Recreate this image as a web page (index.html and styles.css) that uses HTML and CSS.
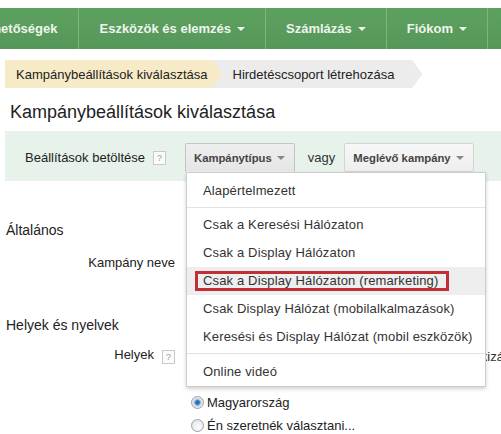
FILE: index.html
```html
<!DOCTYPE html>
<html>
<head>
  <meta charset="UTF-8">
  <meta name="viewport" content="width=device-width, initial-scale=1.0">
  <title>Kampánybeállítások</title>
  <link rel="stylesheet" href="styles.css">
</head>
<body>
  <!-- Top navigation -->
  <div class="topnav">
    <div class="nav-item nav-first">Lehetőségek</div>
    <div class="nav-item">Eszközök és elemzés <span class="caret"></span></div>
    <div class="nav-item">Számlázás <span class="caret"></span></div>
    <div class="nav-item">Fiókom <span class="caret"></span></div>
    <div class="nav-item nav-rest"></div>
  </div>

  <!-- Steps -->
  <div class="crumbs">
    <div class="crumb crumb-active">Kampánybeállítások kiválasztása</div>
    <div class="crumb crumb-next">Hirdetéscsoport létrehozása</div>
  </div>

  <h1 class="page-title">Kampánybeállítások kiválasztása</h1>

  <!-- Load settings bar -->
  <div class="load-bar">
    <span class="load-label">Beállítások betöltése</span>
    <span class="help">?</span>
    <div class="picker">
      <button class="btn btn-open">Kampánytípus<span class="caret caret-dark"></span></button>
      <div class="menu">
        <div class="menu-group">
          <div class="menu-item">Alapértelmezett</div>
        </div>
        <div class="menu-group">
          <div class="menu-item">Csak a Keresési Hálózaton</div>
          <div class="menu-item">Csak a Display Hálózaton</div>
          <div class="menu-item menu-item-hover"><span class="marked">Csak a Display Hálózaton (remarketing)</span></div>
          <div class="menu-item">Csak Display Hálózat (mobilalkalmazások)</div>
          <div class="menu-item">Keresési és Display Hálózat (mobil eszközök)</div>
        </div>
        <div class="menu-group">
          <div class="menu-item">Online videó</div>
        </div>
      </div>
    </div>
    <span class="or">vagy</span>
    <button class="btn">Meglévő kampány<span class="caret caret-dark"></span></button>
  </div>

  <!-- Settings form -->
  <div class="form">
    <h2 class="section-title section-first">Általános</h2>
    <div class="row row-name">
      <div class="row-label">Kampány neve</div>
      <div class="row-field"></div>
    </div>

    <h2 class="section-title section-places">Helyek és nyelvek</h2>
    <div class="row row-places">
      <div class="row-label">Helyek<span class="help">?</span></div>
      <div class="row-field">
        <div class="field-note">Mely földrajzi helyeket szeretné megcélozni (vagy kizárni)?</div>
        <label class="radio"><span class="radio-dot"></span>Minden ország és terület</label>
        <label class="radio"><span class="radio-dot radio-on"></span>Magyarország</label>
        <label class="radio"><span class="radio-dot"></span>Én szeretnék választani...</label>
      </div>
    </div>
  </div>
</body>
</html>
```

FILE: styles.css
```css
body {
  margin: 0;
  font-family: "Liberation Sans", Arial, sans-serif;
  font-size: 13px;
  color: #222;
  background: #fff;
  overflow: hidden;
}

/* top navigation */
.topnav {
  display: flex;
  height: 41px;
  margin-top: 8px;
  background: linear-gradient(#5da15f, #559759);
  white-space: nowrap;
}
.nav-item {
  display: flex;
  align-items: center;
  padding: 0 20px;
  color: #eef5ee;
  font-weight: bold;
  font-size: 13px;
  border-right: 1px solid #7cb67d;
  flex-shrink: 0;
}
.nav-first {
  margin-left: -42px;
  padding-right: 21px;
}
.nav-rest {
  flex: 1;
  border-right: none;
}
.caret {
  display: inline-block;
  margin-left: 6px;
  border-left: 4px solid transparent;
  border-right: 4px solid transparent;
  border-top: 4px solid #eef5ee;
}
.caret-dark {
  border-top-color: #888;
  margin-left: 5px;
  vertical-align: 2px;
}

/* steps */
.crumbs {
  display: flex;
  height: 28px;
  margin: 11px 0 0 5px;
}
.crumb {
  display: flex;
  align-items: center;
  font-size: 13px;
  color: #222;
  clip-path: polygon(0 0, calc(100% - 10px) 0, 100% 50%, calc(100% - 10px) 100%, 0 100%);
}
.crumb-active {
  position: relative;
  z-index: 1;
  padding: 0 15px 0 11px;
  background: #f6ebc6;
}
.crumb-next {
  margin-left: -10px;
  padding: 0 28px 0 20px;
  background: #ececec;
}

.page-title {
  margin: 13px 0 0 10px;
  font-size: 18px;
  font-weight: normal;
  line-height: 22px;
  color: #222;
}

/* load settings bar */
.load-bar {
  display: flex;
  align-items: flex-start;
  height: 50px;
  margin: 8px 0 0 5px;
  padding: 12px 0 0 20px;
  box-sizing: border-box;
  background: #e7f2eb;
  white-space: nowrap;
}
.load-label {
  line-height: 29px;
}
.help {
  display: inline-block;
  width: 11px;
  height: 12px;
  margin: 8px 0 0 8px;
  border: 1px solid #c9c9c9;
  background: #fbfbfb;
  color: #999;
  font-size: 9px;
  line-height: 12px;
  text-align: center;
}
.picker {
  position: relative;
  margin-left: 19px;
}
.btn {
  height: 29px;
  padding: 0 9px 0 8px;
  border: 1px solid #d4d4d4;
  border-radius: 2px;
  background: linear-gradient(#f7f7f7, #eeeeee);
  font-family: inherit;
  font-size: 11.3px;
  font-weight: bold;
  color: #444;
}
.btn-open {
  border-color: #c4c4c4;
  border-bottom-color: transparent;
  border-radius: 2px 2px 0 0;
  background: linear-gradient(#eeeeee, #e6e6e6);
}
.or {
  margin: 0 9px 0 13px;
  line-height: 29px;
  color: #333;
}

/* dropdown */
.menu {
  position: absolute;
  top: 29px;
  left: 1px;
  z-index: 5;
  width: 298px;
  border: 1px solid #cccccc;
  background: #fff;
  box-shadow: 0 2px 4px rgba(0,0,0,0.18);
}
.menu-group {
  padding: 3px 0 2px;
  border-top: 1px solid #e3e3e3;
}
.menu-group:first-child {
  padding-top: 4px;
  border-top: none;
}
.menu-group:last-child {
  padding: 4px 0 0;
}
.menu-item {
  height: 28px;
  padding-left: 16px;
  line-height: 28px;
  letter-spacing: 0.15px;
  color: #333;
}
.menu-item-hover {
  background: #eeeeee;
}
.marked {
  display: inline-block;
  margin-left: -8px;
  padding: 0 8px 0 5px;
  border: 3px solid #bf2f35;
  line-height: 14px;
}

/* form */
.form {
  padding-left: 6px;
}
.section-title {
  margin: 0;
  font-size: 14px;
  font-weight: normal;
  line-height: 18px;
  color: #222;
}
.section-first {
  margin-top: 40px;
}
.section-places {
  margin-top: 44px;
}
.row {
  display: flex;
}
.row-name {
  margin-top: 15px;
}
.row-places {
  margin-top: 12px;
}
.row-label {
  flex-shrink: 0;
  width: 169px;
  text-align: right;
  line-height: 18px;
  color: #222;
}
.row-label .help {
  margin: 0 0 0 8px;
  vertical-align: -1px;
}
.row-field {
  margin-left: 16px;
  min-height: 18px;
  white-space: nowrap;
}
.field-note {
  line-height: 22px;
  color: #333;
}
.radio {
  display: flex;
  align-items: center;
  height: 23px;
  font-size: 13px;
  color: #222;
}
.radio-dot {
  width: 11px;
  height: 11px;
  margin-right: 3px;
  border: 1px solid #9aa3a8;
  border-radius: 50%;
  background: radial-gradient(circle at 60% 65%, #ffffff, #d9dde0);
}
.radio-on {
  background: radial-gradient(circle, #1d5fa8 0, #3d7fc3 2px, #c8d6e4 3.5px, #f2f4f6 6px);
}
```
